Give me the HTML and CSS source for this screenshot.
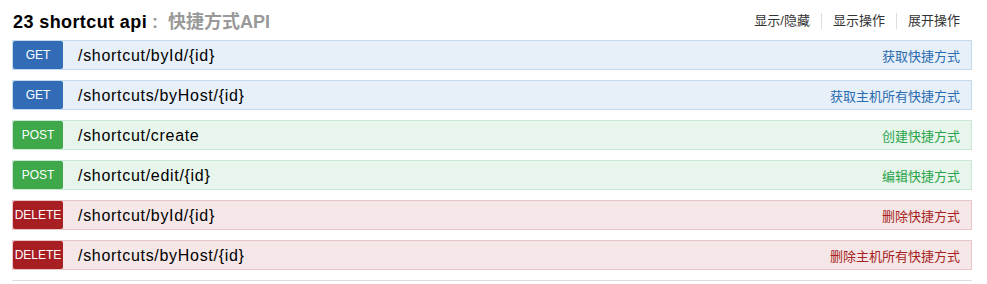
FILE: index.html
```html
<!DOCTYPE html>
<html lang="zh">
<head>
  <meta charset="UTF-8">
  <title>shortcut api</title>
  <link rel="stylesheet" href="styles.css">
</head>
<body>
  <div class="resource">
    <div class="heading">
      <h2><span class="name">23 shortcut api</span><span class="desc"> :  快捷方式API</span></h2>
      <ul class="options">
        <li>显示/隐藏</li>
        <li>显示操作</li>
        <li>展开操作</li>
      </ul>
    </div>

    <ul class="operations">
      <li class="op get">
        <span class="method">GET</span>
        <span class="path">/shortcut/byId/{id}</span>
        <span class="summary">获取快捷方式</span>
      </li>
      <li class="op get">
        <span class="method">GET</span>
        <span class="path">/shortcuts/byHost/{id}</span>
        <span class="summary">获取主机所有快捷方式</span>
      </li>
      <li class="op post">
        <span class="method">POST</span>
        <span class="path">/shortcut/create</span>
        <span class="summary">创建快捷方式</span>
      </li>
      <li class="op post">
        <span class="method">POST</span>
        <span class="path">/shortcut/edit/{id}</span>
        <span class="summary">编辑快捷方式</span>
      </li>
      <li class="op delete">
        <span class="method">DELETE</span>
        <span class="path">/shortcut/byId/{id}</span>
        <span class="summary">删除快捷方式</span>
      </li>
      <li class="op delete">
        <span class="method">DELETE</span>
        <span class="path">/shortcuts/byHost/{id}</span>
        <span class="summary">删除主机所有快捷方式</span>
      </li>
    </ul>
  </div>
</body>
</html>
```

FILE: styles.css
```css
body {
  margin: 0;
  font-family: "Liberation Sans", Arial, "Noto Sans CJK SC", sans-serif;
  color: #000;
  background: #fff;
}

.resource {
  width: 960px;
  margin-left: 12px;
  border-bottom: 1px solid #ddd;
}

.heading {
  height: 40px;
  display: flex;
  align-items: center;
  justify-content: space-between;
}

.heading h2 {
  margin: 0 0 0 1px;
  font-size: 18px;
  font-weight: bold;
  white-space: pre;
}

.heading .name {
  color: #000;
  letter-spacing: 0.4px;
}

.heading .desc {
  color: #999;
}

.options {
  list-style: none;
  margin: 2px 12px 0 0;
  padding: 0;
  display: flex;
  font-size: 13px;
  color: #333;
}

.options li {
  padding: 0 11px;
  border-left: 1px solid #ddd;
  line-height: 16px;
}

.options li:first-child {
  border-left: none;
}

.options li:last-child {
  padding-right: 0;
}

.operations {
  list-style: none;
  margin: 0;
  padding: 0;
}

.op {
  height: 28px;
  margin-bottom: 10px;
  border: 1px solid;
  display: flex;
  align-items: center;
}

.method {
  width: 50px;
  height: 28px;
  border-radius: 2px;
  color: #fff;
  font-size: 12px;
  display: flex;
  align-items: center;
  justify-content: center;
  flex-shrink: 0;
}

.path {
  margin-left: 15px;
  padding-top: 1px;
  font-size: 16px;
  letter-spacing: 0.7px;
  flex: 1;
}

.summary {
  font-size: 13px;
  margin-right: 11px;
}

.get {
  background: #e7eff8;
  border-color: #c3d9ec;
}

.get .method {
  background: #326cb6;
}

.get .summary {
  color: #2a6cb0;
}

.post {
  background: #e8f5ec;
  border-color: #c8e8d3;
}

.post .method {
  background: #3ea84b;
}

.post .summary {
  color: #2aa44a;
}

.delete {
  background: #f5e7e7;
  border-color: #e8c6c7;
}

.delete .method {
  background: #a71e23;
}

.delete .summary {
  color: #a71e23;
}
```
